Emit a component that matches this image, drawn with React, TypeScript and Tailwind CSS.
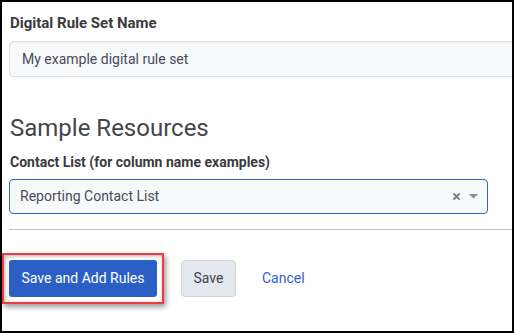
import React from "react";

export default function App() {
  return (
    <div
      className="w-[514px] h-[333px] border-2 border-black bg-white overflow-hidden pl-[7px] pt-[11px]"
      style={{ fontFamily: "Roboto, 'Liberation Sans', sans-serif" }}
    >
      <div className="h-[20px] leading-[20px] text-[15px] font-bold text-[#3a3a3f] pl-[1px]">
        Digital Rule Set Name
      </div>
      <div className="mt-[8px] h-[36px] w-[530px] rounded-[4px] border border-[#dde0e5] bg-[#f8f9fb] shadow-[inset_0_1px_2px_rgba(0,0,0,0.06)] flex items-center pl-[12px] text-[14px] text-[#4a4a58]">
        My example digital rule set
      </div>
      <div className="mt-[37px] h-[28px] leading-[28px] text-[24px] text-[#45454a] pl-[1px]">
        Sample Resources
      </div>
      <div className="mt-[10px] h-[20px] leading-[20px] text-[14px] font-bold text-[#3a3a3f] pl-[1px]">
        Contact List (for column name examples)
      </div>
      <div className="mt-[7px] h-[35px] w-[479px] rounded-[4px] border border-[#2f66cc] bg-[#f8f9fb] flex items-center pl-[10px] pr-[9px] text-[14px] text-[#4a4a58]">
        <span className="flex-1">Reporting Contact List</span>
        <svg width="7" height="7" viewBox="0 0 7 7" className="mr-[9px]">
          <path d="M1 1L6 6M6 1L1 6" stroke="#7a7a80" strokeWidth="1.8" strokeLinecap="round" />
        </svg>
        <svg width="9" height="5" viewBox="0 0 9 5">
          <path d="M0 0H9L4.5 4.5Z" fill="#8a8a90" />
        </svg>
      </div>
      <div className="mt-[15px] h-px w-[530px] bg-[#bdbdbd]" />
      <div className="mt-[23px] flex items-center">
        <div className="-ml-[7px] border-2 border-[#ee3b3f] p-[5px] shadow-[2px_3px_5px_rgba(0,0,0,0.4),inset_1px_1px_4px_rgba(0,0,0,0.3)]">
          <div className="w-[148px] h-[37px] rounded-[3px] bg-[#2c5fc6] flex items-center justify-center text-white text-[14px]">
            Save and Add Rules
          </div>
        </div>
        <div className="ml-[17px] w-[55px] h-[37px] rounded-[4px] border border-[#d0d5dd] bg-[#e3e7ee] flex items-center justify-center text-[14px] text-[#45454c]">
          Save
        </div>
        <div className="ml-[26px] text-[14px] text-[#3a60c8]">Cancel</div>
      </div>
    </div>
  );
}
